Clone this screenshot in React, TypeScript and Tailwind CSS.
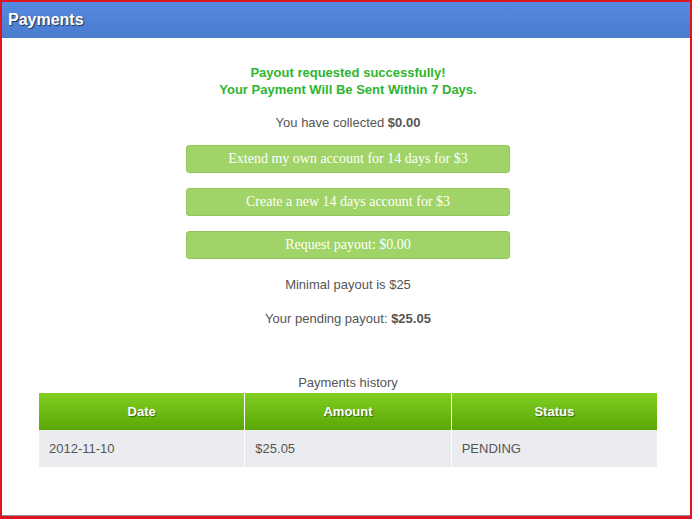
export default function App() {
  const sans = { fontFamily: 'Arial, "Liberation Sans", sans-serif' };
  const btn =
    'flex h-[28px] w-[324px] items-center justify-center rounded-[3px] border border-[#93c75c] bg-[#a0d468] text-[14px] text-white';

  return (
    <div className="h-[519px] w-[693px] bg-white" style={sans}>
      <div className="flex h-[519px] w-[692px] flex-col border-2 border-b-[3px] border-[#e0141e]">
        <div className="flex h-[36px] items-center bg-gradient-to-b from-[#5689e2] to-[#4a7ccd] px-[6px] text-[16px] font-bold text-white [text-shadow:1px_1px_1px_rgba(0,0,0,0.6)]">
          Payments
        </div>

        <div className="flex flex-1 flex-col items-center border-b border-[#8f8fa8] pl-[4px]">
          <div className="mt-[26px] text-center text-[13px] font-bold leading-[17px] text-[#2fb52f]">
            <div>Payout requested successfully!</div>
            <div>Your Payment Will Be Sent Within 7 Days.</div>
          </div>

          <div className="mt-[15px] text-[13px] text-[#555]">
            You have collected <b>$0.00</b>
          </div>

          <div
            className="mt-[12px] flex flex-col gap-[15px]"
            style={{ fontFamily: '"Liberation Serif", "Times New Roman", serif' }}
          >
            <div className={btn}>Extend my own account for 14 days for $3</div>
            <div className={btn}>Create a new 14 days account for $3</div>
            <div className={btn}>Request payout: $0.00</div>
          </div>

          <div className="mt-[16px] text-[13px] text-[#555]">Minimal payout is $25</div>
          <div className="mt-[15px] text-[13px] text-[#555]">
            Your pending payout: <b>$25.05</b>
          </div>

          <div className="mt-[44px] text-[13px] text-[#555]">Payments history</div>

          <div className="mt-[1px] grid w-[618px] grid-cols-3 gap-x-px">
            {['Date', 'Amount', 'Status'].map((h) => (
              <div
                key={h}
                className="flex h-[37px] items-center justify-center bg-gradient-to-b from-[#80cf20] to-[#5aa704] text-[13px] font-bold text-white [text-shadow:1px_1px_1px_rgba(0,0,0,0.45)]"
              >
                {h}
              </div>
            ))}
            {['2012-11-10', '$25.05', 'PENDING'].map((c) => (
              <div
                key={c}
                className="flex h-[37px] items-center bg-[#ebecef] px-[10px] text-[13px] text-[#555]"
              >
                {c}
              </div>
            ))}
          </div>
        </div>
      </div>
    </div>
  );
}
